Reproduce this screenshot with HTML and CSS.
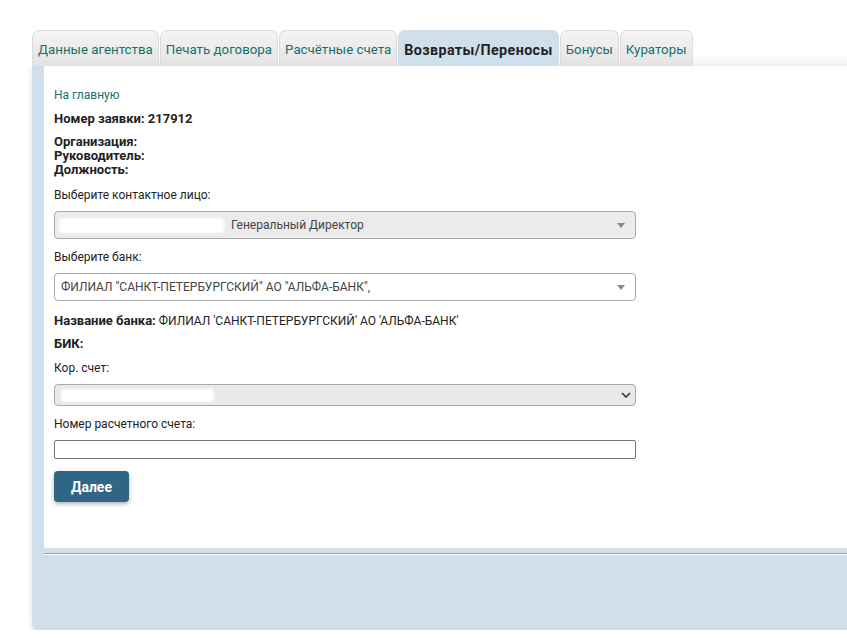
FILE: index.html
```html
<!DOCTYPE html>
<html lang="ru">
<head>
<meta charset="utf-8">
<title>Возвраты/Переносы</title>
<link rel="stylesheet" href="styles.css">
</head>
<body>
<div class="wrap">
  <ul class="tabs">
    <li class="tab">Данные агентства</li>
    <li class="tab">Печать договора</li>
    <li class="tab">Расчётные счета</li>
    <li class="tab active">Возвраты/Переносы</li>
    <li class="tab">Бонусы</li>
    <li class="tab">Кураторы</li>
  </ul>
  <div class="panel">
    <div class="content">
      <a class="home" href="#">На главную</a>
      <div class="order">Номер заявки: 217912</div>
      <div class="org">
        <div>Организация:</div>
        <div>Руководитель:</div>
        <div>Должность:</div>
      </div>
      <div class="label l1">Выберите контактное лицо:</div>
      <div class="select disabled">
        <span class="blob b1"></span>
        <span class="sel-text">Генеральный Директор</span>
        <span class="tri"></span>
      </div>
      <div class="label l2">Выберите банк:</div>
      <div class="select">
        <span class="sel-text">ФИЛИАЛ "САНКТ-ПЕТЕРБУРГСКИЙ" АО "АЛЬФА-БАНК",</span>
        <span class="tri"></span>
      </div>
      <div class="bank"><b>Название банка:</b> ФИЛИАЛ 'САНКТ-ПЕТЕРБУРГСКИЙ' АО 'АЛЬФА-БАНК'</div>
      <div class="bik"><b>БИК:</b></div>
      <div class="label l3">Кор. счет:</div>
      <div class="native">
        <span class="blob b2"></span>
        <svg class="chev" width="10" height="6" viewBox="0 0 10 6"><path d="M1 1 L5 5 L9 1" fill="none" stroke="#333" stroke-width="1.6"/></svg>
      </div>
      <div class="label l4">Номер расчетного счета:</div>
      <div class="input"></div>
      <button class="btn">Далее</button>
    </div>
    <div class="footer"></div>
  </div>
</div>
</body>
</html>
```
FILE: styles.css
```css
html, body {
  margin: 0;
  padding: 0;
  background: #fff;
  overflow: hidden;
}
body {
  font-family: Roboto, "Liberation Sans", sans-serif;
  color: #222;
}
.wrap {
  margin: 30px 0 0 32px;
  width: 900px;
}
.tabs {
  list-style: none;
  margin: 0;
  padding: 0;
  display: flex;
  gap: 1px;
  height: 36px;
  background: linear-gradient(to bottom, #fff 0, #fff 65%, #f2f2f2 100%);
}
.tab {
  box-sizing: border-box;
  height: 36px;
  padding: 2px 5px 0;
  display: flex;
  align-items: center;
  font-size: 13.3px;
  color: #17706c;
  background: linear-gradient(to bottom, #f4f4f4, #e3e3e3);
  border: 1px solid #dcdcdc;
  border-bottom: 0;
  border-radius: 7px 7px 0 0;
  white-space: nowrap;
}
.tab.active {
  background: #cfdfeb;
  border-color: #cfdfeb;
  color: #222;
  font-weight: bold;
  font-size: 14.3px;
  letter-spacing: 0.4px;
}
.panel {
  background: #cfdfeb;
  padding-left: 12px;
  height: 564px;
  border-bottom-left-radius: 6px;
  box-shadow: 0 3px 6px rgba(0, 0, 0, 0.12);
}
.content {
  background: #fff;
  height: 482px;
  box-sizing: border-box;
  padding: 22px 10px 0;
  display: flex;
  flex-direction: column;
  align-items: flex-start;
  font-size: 12px;
  line-height: 15px;
}
.home {
  color: #17706c;
  text-decoration: none;
  font-size: 12px;
}
.order {
  margin-top: 8px;
  font-size: 13px;
  font-weight: bold;
}
.org {
  margin-top: 9px;
  font-size: 13px;
  font-weight: bold;
  line-height: 14px;
}
.label { color: #222; }
.l1 { margin-top: 11px; }
.l2 { margin-top: 11px; }
.l3 { margin-top: 9px; }
.l4 { margin-top: 11px; }
.select {
  position: relative;
  box-sizing: border-box;
  width: 582px;
  height: 28px;
  margin-top: 8px;
  border: 1px solid #aaa;
  border-radius: 4px;
  background: #fff;
  display: flex;
  align-items: center;
  padding-left: 6px;
  color: #444;
}
.select.disabled { background: #ebebeb; }
.sel-text { white-space: nowrap; }
.blob {
  display: inline-block;
  background: #fff;
  filter: blur(1px);
  border-radius: 4px;
}
.b1 {
  width: 165px;
  height: 15px;
  margin-left: -2px;
  margin-right: 7px;
}
.tri {
  position: absolute;
  right: 10px;
  top: 11px;
  width: 0;
  height: 0;
  border-left: 4px solid transparent;
  border-right: 4px solid transparent;
  border-top: 5px solid #888;
}
.bank { margin-top: 12px; }
.bank b, .bik b { font-size: 13px; }
.bik { margin-top: 7px; }
.native {
  position: relative;
  box-sizing: border-box;
  width: 582px;
  height: 22px;
  margin-top: 8px;
  border: 1px solid #aaa;
  border-radius: 4px;
  background: #e9e9e9;
  display: flex;
  align-items: center;
  padding-left: 6px;
}
.b2 {
  width: 153px;
  height: 13px;
}
.chev {
  position: absolute;
  right: 4px;
  top: 7px;
}
.input {
  box-sizing: border-box;
  width: 582px;
  height: 19px;
  margin-top: 8px;
  border: 1px solid #767676;
  border-radius: 2px;
  background: #fff;
}
.btn {
  margin-top: 12px;
  width: 75px;
  height: 31px;
  border: 0;
  border-radius: 4px;
  background: #2f6585;
  color: #fff;
  font-family: inherit;
  font-size: 14px;
  font-weight: bold;
  box-shadow: 0 2px 4px rgba(0, 0, 0, 0.3);
}
.footer {
  margin-top: 5px;
  border-top: 1px solid #a0a0a0;
  box-shadow: 0 1px 0 #fff;
}
```
